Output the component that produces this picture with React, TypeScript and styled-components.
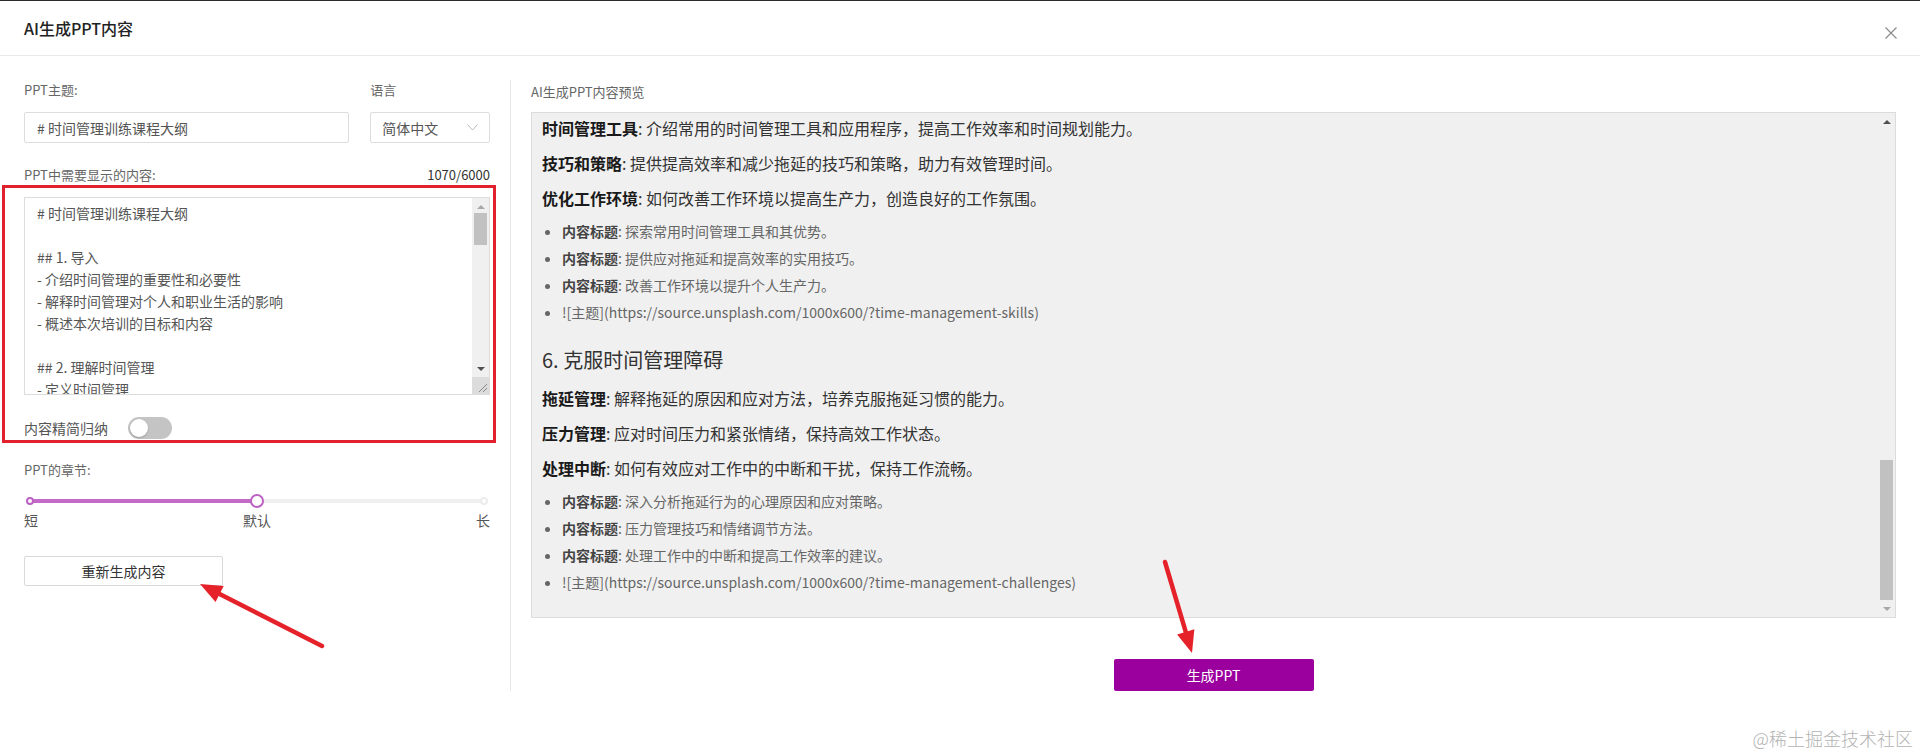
import React from 'react';
import styled, { createGlobalStyle } from 'styled-components';

const GlobalStyle = createGlobalStyle`
  html, body {
    margin: 0;
    padding: 0;
    background: #fff;
  }
  body {
    font-family: "Noto Sans CJK SC", "Noto Sans", sans-serif;
    color: #333;
  }
  * {
    box-sizing: border-box;
  }
`;

const Page = styled.div`
  position: relative;
  width: 1920px;
  height: 755px;
  overflow: hidden;
  border-top: 1px solid #2b2b2b;
  background: #fff;
`;

const Header = styled.div`
  height: 55px;
  display: flex;
  align-items: center;
  justify-content: space-between;
  padding: 0 22px 0 24px;
  border-bottom: 1px solid #e9e9e9;
`;

const Title = styled.h2`
  margin: 0;
  font-size: 16px;
  font-weight: 500;
  color: #222;
  line-height: 22px;
`;

const CloseButton = styled.button`
  width: 14px;
  height: 14px;
  padding: 0;
  border: none;
  background: none;
  display: flex;
  align-items: center;
  justify-content: center;
  cursor: pointer;
  margin-top: 10px;
`;

const Body = styled.div`
  display: flex;
  padding-top: 24px;
`;

const LeftPanel = styled.div`
  width: 511px;
  padding: 0 20px 0 24px;
  border-right: 1px solid #e8e8e8;
  display: flex;
  flex-direction: column;
`;

const RightPanel = styled.div`
  flex: 1;
  padding: 2px 24px 0 20px;
  display: flex;
  flex-direction: column;
`;

const FieldRow = styled.div`
  display: flex;
  gap: 21px;
`;

const Field = styled.div<{ $width: number }>`
  width: ${(p) => p.$width}px;
  display: flex;
  flex-direction: column;
  gap: 12px;
`;

const Label = styled.div`
  font-size: 13px;
  line-height: 20px;
  color: #666;
`;

const TextInput = styled.input`
  height: 31px;
  width: 100%;
  border: 1px solid #ddd;
  border-radius: 2px;
  padding: 0 12px;
  font-family: inherit;
  font-size: 14px;
  color: #555;
  outline: none;
`;

const SelectBox = styled.div`
  height: 31px;
  border: 1px solid #ddd;
  border-radius: 2px;
  padding: 0 11px 0 11px;
  display: flex;
  align-items: center;
  justify-content: space-between;
  font-size: 14px;
  color: #555;
`;

const CountRow = styled.div`
  margin-top: 22px;
  display: flex;
  justify-content: space-between;
  align-items: center;
`;

const Counter = styled.span`
  font-size: 13px;
  line-height: 20px;
  color: #333;
`;

const Highlight = styled.div`
  position: relative;
  margin-top: 12px;
`;

const RedFrame = styled.div`
  position: absolute;
  top: -12px;
  left: -22px;
  right: -6px;
  bottom: -4px;
  border: 3px solid #e1222e;
  pointer-events: none;
`;

const TextBox = styled.div`
  height: 198px;
  border: 1px solid #dcdcdc;
  display: flex;
  background: #fff;
`;

const Textarea = styled.textarea`
  flex: 1;
  border: none;
  outline: none;
  resize: none;
  overflow: hidden;
  padding: 4px 12px;
  font-family: inherit;
  font-size: 14px;
  line-height: 22px;
  color: #555;
  background: transparent;
`;

const ScrollColumn = styled.div<{ $bg: string }>`
  width: 17px;
  display: flex;
  flex-direction: column;
  background: ${(p) => p.$bg};
`;

const ScrollArrow = styled.div`
  height: 17px;
  display: flex;
  align-items: center;
  justify-content: center;
`;

const Triangle = styled.span<{ $dir: 'up' | 'down'; $color: string }>`
  width: 0;
  height: 0;
  border-left: 4px solid transparent;
  border-right: 4px solid transparent;
  ${(p) =>
    p.$dir === 'up'
      ? `border-bottom: 4px solid ${p.$color};`
      : `border-top: 4px solid ${p.$color};`}
`;

const ScrollTrack = styled.div`
  flex: 1;
  position: relative;
`;

const ScrollThumb = styled.div`
  position: absolute;
  left: 2px;
  right: 2px;
  background: #c1c1c1;
`;

const ResizeCorner = styled.div`
  height: 17px;
  background: #dcdcdc;
  display: flex;
  align-items: flex-end;
  justify-content: flex-end;
  padding: 0 2px 2px 0;
`;

const ToggleRow = styled.div`
  margin-top: 22px;
  display: flex;
  align-items: center;
  gap: 20px;
`;

const ToggleLabel = styled.span`
  font-size: 14px;
  line-height: 22px;
  color: #555;
`;

const Switch = styled.div<{ $on: boolean }>`
  width: 44px;
  height: 22px;
  border-radius: 11px;
  background: ${(p) => (p.$on ? '#9c00a0' : '#c4c4c4')};
  padding: 2px;
  display: flex;
  justify-content: ${(p) => (p.$on ? 'flex-end' : 'flex-start')};
`;

const SwitchKnob = styled.span`
  width: 18px;
  height: 18px;
  border-radius: 50%;
  background: #fff;
  box-shadow: 0 1px 2px rgba(0, 0, 0, 0.2);
`;

const SectionLabel = styled(Label)`
  margin-top: 21px;
`;

const Slider = styled.div`
  position: relative;
  height: 14px;
  margin: 14px 6px 0;
`;

const SliderTrack = styled.div`
  position: absolute;
  left: 0;
  right: 0;
  top: 5px;
  height: 4px;
  border-radius: 2px;
  background: #efefef;
`;

const SliderFill = styled.div`
  height: 100%;
  border-radius: 2px;
  background: #c46ac8;
`;

const SliderDot = styled.span<{ $active: boolean; $big?: boolean }>`
  position: absolute;
  top: 50%;
  width: ${(p) => (p.$big ? 14 : 8)}px;
  height: ${(p) => (p.$big ? 14 : 8)}px;
  border-radius: 50%;
  background: #fff;
  border: 2px solid ${(p) => (p.$active ? '#bb62c3' : '#ececec')};
  transform: translate(-50%, -50%);
`;

const SliderLabels = styled.div`
  margin-top: 3px;
  display: flex;
  justify-content: space-between;
  font-size: 14px;
  line-height: 18px;
  color: #555;
`;

const OutlineButton = styled.button`
  margin-top: 27px;
  width: 199px;
  height: 30px;
  border: 1px solid #d9d9d9;
  border-radius: 2px;
  background: #fff;
  font-family: inherit;
  font-size: 14px;
  color: #333;
  cursor: pointer;
`;

const PreviewBox = styled.div`
  margin-top: 10px;
  height: 506px;
  border: 1px solid #dcdcdc;
  background: #f0f0f0;
  display: flex;
`;

const PreviewContent = styled.div`
  flex: 1;
  overflow: hidden;
  padding: 3px 20px 0 10px;
`;

const Para = styled.p`
  margin: 0 0 11px;
  font-size: 16px;
  line-height: 24px;
  color: #333;

  strong {
    color: #1a1a1a;
    font-weight: 700;
  }
`;

const Heading = styled.h3`
  margin: 0 0 11px;
  font-size: 20px;
  line-height: 30px;
  font-weight: 400;
  color: #333;
`;

const BulletList = styled.ul`
  margin: 0 0 22px;
  padding-left: 20px;
  list-style: disc;
  color: #666;
`;

const Bullet = styled.li`
  font-size: 14px;
  line-height: 21px;
  margin-bottom: 6px;
  color: #666;

  strong {
    color: #444;
    font-weight: 700;
  }
`;

const PrimaryButton = styled.button`
  margin: 41px auto 0;
  width: 200px;
  height: 32px;
  border: none;
  border-radius: 2px;
  background: #9b009f;
  color: #fff;
  font-family: inherit;
  font-size: 14px;
  cursor: pointer;
`;

const Watermark = styled.div`
  position: absolute;
  right: 7px;
  bottom: 5px;
  font-size: 18px;
  line-height: 24px;
  font-weight: 300;
  color: #b3b3b3;
`;

const ArrowLayer = styled.svg`
  position: absolute;
  top: 0;
  left: 0;
  pointer-events: none;
`;

const outline = `# 时间管理训练课程大纲

## 1. 导入
- 介绍时间管理的重要性和必要性
- 解释时间管理对个人和职业生活的影响
- 概述本次培训的目标和内容

## 2. 理解时间管理
- 定义时间管理
- 探讨时间管理的基本原则
- 分析常见的时间浪费行为`;

interface ScrollbarProps {
  thumbTop: number;
  thumbHeight: number;
  upColor: string;
  downColor: string;
  bg: string;
  resizable?: boolean;
}

const Scrollbar: React.FC<ScrollbarProps> = ({ thumbTop, thumbHeight, upColor, downColor, bg, resizable }) => (
  <ScrollColumn $bg={bg}>
    <ScrollArrow>
      <Triangle $dir="up" $color={upColor} />
    </ScrollArrow>
    <ScrollTrack>
      <ScrollThumb style={{ top: thumbTop, height: thumbHeight }} />
    </ScrollTrack>
    <ScrollArrow>
      <Triangle $dir="down" $color={downColor} />
    </ScrollArrow>
    {resizable && (
      <ResizeCorner>
        <svg width="9" height="9" viewBox="0 0 9 9">
          <line x1="1" y1="9" x2="9" y2="1" stroke="#888" strokeWidth="1" />
          <line x1="5" y1="9" x2="9" y2="5" stroke="#888" strokeWidth="1" />
        </svg>
      </ResizeCorner>
    )}
  </ScrollColumn>
);

const marks = ['短', '默认', '长'];

const arrowHead = (x1: number, y1: number, x2: number, y2: number, len: number, half: number) => {
  const dx = x2 - x1;
  const dy = y2 - y1;
  const d = Math.hypot(dx, dy);
  const ux = dx / d;
  const uy = dy / d;
  const bx = x2 - ux * len;
  const by = y2 - uy * len;
  return {
    base: [bx, by],
    points: `${x2},${y2} ${bx - uy * half},${by + ux * half} ${bx + uy * half},${by - ux * half}`,
  };
};

const RedArrow: React.FC<{ from: [number, number]; to: [number, number] }> = ({ from, to }) => {
  const head = arrowHead(from[0], from[1], to[0], to[1], 22, 9);
  return (
    <g>
      <line
        x1={from[0]}
        y1={from[1]}
        x2={head.base[0]}
        y2={head.base[1]}
        stroke="#e5222a"
        strokeWidth="4.5"
        strokeLinecap="round"
      />
      <polygon points={head.points} fill="#e5222a" />
    </g>
  );
};

const App: React.FC = () => {
  const level = 1;

  return (
    <>
      <GlobalStyle />
      <Page>
        <Header>
          <Title>AI生成PPT内容</Title>
          <CloseButton aria-label="close">
            <svg width="12" height="12" viewBox="0 0 12 12">
              <path d="M0.5 0.5 L11.5 11.5 M11.5 0.5 L0.5 11.5" stroke="#888" strokeWidth="1.1" fill="none" />
            </svg>
          </CloseButton>
        </Header>

        <Body>
          <LeftPanel>
            <FieldRow>
              <Field $width={326}>
                <Label>PPT主题:</Label>
                <TextInput defaultValue="# 时间管理训练课程大纲" />
              </Field>
              <Field $width={120}>
                <Label>语言</Label>
                <SelectBox>
                  <span>简体中文</span>
                  <svg width="11" height="7" viewBox="0 0 11 7">
                    <polyline points="0.5,0.5 5.5,6 10.5,0.5" fill="none" stroke="#bbb" strokeWidth="1" />
                  </svg>
                </SelectBox>
              </Field>
            </FieldRow>

            <CountRow>
              <Label>PPT中需要显示的内容:</Label>
              <Counter>1070/6000</Counter>
            </CountRow>

            <Highlight>
              <TextBox>
                <Textarea readOnly value={outline} />
                <Scrollbar thumbTop={-2} thumbHeight={32} upColor="#a8a8a8" downColor="#505050" bg="#f0f0f0" resizable />
              </TextBox>
              <ToggleRow>
                <ToggleLabel>内容精简归纳</ToggleLabel>
                <Switch $on={false}>
                  <SwitchKnob />
                </Switch>
              </ToggleRow>
              <RedFrame />
            </Highlight>

            <SectionLabel>PPT的章节:</SectionLabel>
            <Slider>
              <SliderTrack>
                <SliderFill style={{ width: `${(level / (marks.length - 1)) * 100}%` }} />
              </SliderTrack>
              {marks.map((m, i) => (
                <SliderDot
                  key={m}
                  $active={i <= level}
                  $big={i === level}
                  style={{ left: `${(i / (marks.length - 1)) * 100}%` }}
                />
              ))}
            </Slider>
            <SliderLabels>
              {marks.map((m) => (
                <span key={m}>{m}</span>
              ))}
            </SliderLabels>

            <OutlineButton>重新生成内容</OutlineButton>
          </LeftPanel>

          <RightPanel>
            <Label>AI生成PPT内容预览</Label>
            <PreviewBox>
              <PreviewContent>
                <Para>
                  <strong>时间管理工具</strong>: 介绍常用的时间管理工具和应用程序，提高工作效率和时间规划能力。
                </Para>
                <Para>
                  <strong>技巧和策略</strong>: 提供提高效率和减少拖延的技巧和策略，助力有效管理时间。
                </Para>
                <Para>
                  <strong>优化工作环境</strong>: 如何改善工作环境以提高生产力，创造良好的工作氛围。
                </Para>
                <BulletList>
                  <Bullet>
                    <strong>内容标题</strong>: 探索常用时间管理工具和其优势。
                  </Bullet>
                  <Bullet>
                    <strong>内容标题</strong>: 提供应对拖延和提高效率的实用技巧。
                  </Bullet>
                  <Bullet>
                    <strong>内容标题</strong>: 改善工作环境以提升个人生产力。
                  </Bullet>
                  <Bullet>![主题](https://source.unsplash.com/1000x600/?time-management-skills)</Bullet>
                </BulletList>

                <Heading>6. 克服时间管理障碍</Heading>
                <Para>
                  <strong>拖延管理</strong>: 解释拖延的原因和应对方法，培养克服拖延习惯的能力。
                </Para>
                <Para>
                  <strong>压力管理</strong>: 应对时间压力和紧张情绪，保持高效工作状态。
                </Para>
                <Para>
                  <strong>处理中断</strong>: 如何有效应对工作中的中断和干扰，保持工作流畅。
                </Para>
                <BulletList>
                  <Bullet>
                    <strong>内容标题</strong>: 深入分析拖延行为的心理原因和应对策略。
                  </Bullet>
                  <Bullet>
                    <strong>内容标题</strong>: 压力管理技巧和情绪调节方法。
                  </Bullet>
                  <Bullet>
                    <strong>内容标题</strong>: 处理工作中的中断和提高工作效率的建议。
                  </Bullet>
                  <Bullet>![主题](https://source.unsplash.com/1000x600/?time-management-challenges)</Bullet>
                </BulletList>
              </PreviewContent>
              <Scrollbar thumbTop={330} thumbHeight={140} upColor="#505050" downColor="#a8a8a8" bg="#f0f0f0" />
            </PreviewBox>
            <PrimaryButton>生成PPT</PrimaryButton>
          </RightPanel>
        </Body>

        <Watermark>@稀土掘金技术社区</Watermark>

        <ArrowLayer width="1920" height="755" viewBox="0 0 1920 755">
          <RedArrow from={[322, 645]} to={[200, 583]} />
          <RedArrow from={[1165, 561]} to={[1192, 652]} />
        </ArrowLayer>
      </Page>
    </>
  );
};

export default App;
